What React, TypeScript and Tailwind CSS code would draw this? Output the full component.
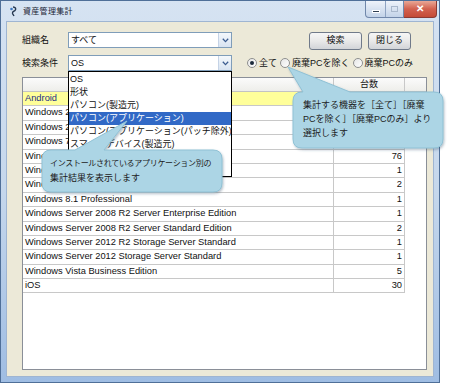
const rows: [string, number][] = [
  ['Android', 12],
  ['Windows 2000 Professional', 3],
  ['Windows 2003 Server Standard Edition', 1],
  ['Windows 7 Enterprise', 8],
  ['Windows 7 Professional', 76],
  ['Windows 7 Ultimate', 1],
  ['Windows 8 Pro', 2],
  ['Windows 8.1 Professional', 1],
  ['Windows Server 2008 R2 Server Enterprise Edition', 1],
  ['Windows Server 2008 R2 Server Standard Edition', 2],
  ['Windows Server 2012 R2 Storage Server Standard', 1],
  ['Windows Server 2012 Storage Server Standard', 1],
  ['Windows Vista Business Edition', 5],
  ['iOS', 30],
];

const options = [
  'OS',
  '形状',
  'パソコン(製造元)',
  'パソコン(アプリケーション)',
  'パソコン(アプリケーション(パッチ除外))',
  'スマートデバイス(製造元)',
  'スマートデバイス(アプリケーション)',
  '形状(製造元)',
];

function Combo({ value }: { value: string }) {
  return (
    <div className="flex h-[16px] w-[164px] border border-[#7f9db9] bg-white">
      <span className="flex-1 pl-[2px] text-[9px] leading-[14px]">{value}</span>
      <span className="flex w-[13px] items-center justify-center border-l border-[#c5d3e6] bg-gradient-to-b from-[#f4f8fc] to-[#d8e3f1]">
        <svg width="7" height="5" viewBox="0 0 7 5">
          <path d="M0.8 0.8 L3.5 3.6 L6.2 0.8" fill="none" stroke="#3a5b8f" strokeWidth="1.3" />
        </svg>
      </span>
    </div>
  );
}

function Button({ label, width }: { label: string; width: string }) {
  return (
    <div
      className={`flex h-[18px] ${width} items-center justify-center rounded-[3px] border border-[#707a8a] bg-gradient-to-b from-[#f6f6f6] via-[#e9e9e9] to-[#d2d4d8] text-[9px]`}
    >
      {label}
    </div>
  );
}

function Radio({ label, checked = false }: { label: string; checked?: boolean }) {
  return (
    <div className="flex items-center gap-[2px]">
      <span className="flex h-[10px] w-[10px] items-center justify-center rounded-full border border-[#8e8f8f] bg-gradient-to-br from-[#e6e6e6] to-white">
        {checked && <span className="h-[4px] w-[4px] rounded-full bg-[#1c2a3c]" />}
      </span>
      <span className="text-[9px] leading-[12px]">{label}</span>
    </div>
  );
}

export default function App() {
  return (
    <div className="relative h-[385px] w-[450px] overflow-hidden bg-white font-['Liberation_Sans','Noto_Sans_CJK_JP',sans-serif] text-[#111]">
      <div className="flex h-[383px] w-[440px] flex-col border border-[#4f6f98] bg-gradient-to-b from-[#d6e3f2] via-[#c5d7ec] to-[#9fbde3]">
        {/* title bar */}
        <div className="flex h-[20px] shrink-0">
          <div className="flex items-center gap-[5px] pl-[8px] pt-[1px]">
            <svg width="9" height="11" viewBox="0 0 9 11">
              <path d="M4 1 C6.5 1 7.5 3 6 4.5 C5 5.5 3 5.5 3.5 7.5 L5 10" fill="none" stroke="#24364f" strokeWidth="1.4" />
              <circle cx="2.5" cy="3" r="1.3" fill="#3d78c0" />
            </svg>
            <span className="text-[8px] tracking-[0.3px] text-[#1b2636]">資産管理集計</span>
          </div>
          <div className="ml-auto mr-[2px] flex h-[17px]">
            <div className="flex w-[39px] overflow-hidden rounded-bl-[4px] border border-t-0 border-[#7087aa] bg-gradient-to-b from-[#eef3fa] to-[#c3d3e8]">
              <div className="flex w-[19px] items-end justify-center pb-[4px]">
                <span className="h-[3px] w-[8px] border border-white bg-[#2f3e52]" />
              </div>
              <div className="flex flex-1 items-center justify-center border-l border-[#8ea3c2]">
                <span className="h-[6px] w-[7px] border border-[#a9b8cc] bg-transparent" />
              </div>
            </div>
            <div className="flex w-[33px] items-center justify-center rounded-br-[4px] border border-l-0 border-t-0 border-[#8a3a33] bg-gradient-to-b from-[#e8a796] via-[#d2614f] to-[#c44a36] text-[10px] font-bold leading-none text-white">
              ✕
            </div>
          </div>
        </div>

        {/* client area */}
        <div className="relative mx-[5px] mb-[5px] flex flex-1 flex-col border border-[#9fb5d2] bg-[#ece9d8] pb-[6px] pl-[15px] pr-[6px] pt-[10px]">
          <div className="flex h-[18px] items-start">
            <span className="w-[46px] text-[9px] leading-[16px]">組織名</span>
            <Combo value="すべて" />
            <div className="ml-[77px] flex gap-[6px]">
              <Button label="検索" width="w-[53px]" />
              <Button label="閉じる" width="w-[43px]" />
            </div>
          </div>
          <div className="mt-[5px] flex h-[16px] items-center">
            <span className="w-[46px] text-[9px] leading-[16px]">検索条件</span>
            <Combo value="OS" />
            <div className="ml-[15px] flex items-center gap-[3px]">
              <Radio label="全て" checked />
              <Radio label="廃棄PCを除く" />
              <Radio label="廃棄PCのみ" />
            </div>
          </div>

          {/* grid */}
          <div className="mt-[6px] flex flex-1 flex-col border border-[#8a8f98] bg-white">
            <div className="grid h-[14px] grid-cols-[311px_71px_1fr] border-b border-[#c3c3c3] bg-gradient-to-b from-[#fbfbfb] to-[#eeeeea] text-[9px] leading-[13px]">
              <span className="border-r border-[#c8c8c8]" />
              <span className="border-r border-[#c8c8c8] text-center">台数</span>
              <span />
            </div>
            {rows.map(([name, count], i) => (
              <div key={name} className="grid h-[14.4px] grid-cols-[311px_71px] text-[9.3px] leading-[13px]">
                <span
                  className={`overflow-hidden whitespace-nowrap border-b border-r border-[#c8c8c8] pl-[2px] ${
                    i === 0 ? 'bg-[#ffff9a] text-[#1d2f86]' : ''
                  }`}
                >
                  {name}
                </span>
                <span className="border-b border-r border-[#c8c8c8] pr-[2px] text-right">{count}</span>
              </div>
            ))}
          </div>

          {/* open dropdown list */}
          <div className="absolute left-[61px] top-[49px] h-[106px] w-[164px] overflow-hidden border border-black bg-white pt-[1px]">
            {options.map((o, i) => (
              <div
                key={o}
                className={`h-[13px] whitespace-nowrap pl-[1px] text-[9px] leading-[13px] ${
                  i === 3 ? 'bg-[#3169c6] text-white' : ''
                }`}
              >
                {o}
              </div>
            ))}
          </div>
        </div>
      </div>

      {/* callouts */}
      <svg className="pointer-events-none absolute left-0 top-0" width="450" height="385">
        <defs>
          <filter id="sh" x="-10%" y="-10%" width="120%" height="130%">
            <feDropShadow dx="1" dy="1.5" stdDeviation="1.2" floodColor="#30506a" floodOpacity="0.35" />
          </filter>
        </defs>
        <path
          d="M51 150 L75 150 L127 121 L104 150 L213 150 Q222 150 222 159 L222 183 Q222 192 213 192 L51 192 Q42 192 42 183 L42 159 Q42 150 51 150 Z"
          fill="#acd5e5"
          stroke="#8fc1d5"
          filter="url(#sh)"
        />
        <path
          d="M302 92 L303 92 L288 67 L350 92 L434 92 Q443 92 443 101 L443 139 Q443 148 434 148 L302 148 Q293 148 293 139 L293 101 Q293 92 302 92 Z"
          fill="#acd5e5"
          stroke="#8fc1d5"
          filter="url(#sh)"
        />
      </svg>
      <div className="absolute left-[50px] top-[156px] text-[9px] leading-[15px] text-[#1c1c1c]">
        <div className="text-[8px] tracking-[-0.3px]">インストールされているアプリケーション別の</div>
        <div>集計結果を表示します</div>
      </div>
      <div className="absolute left-[303px] top-[98px] text-[9px] leading-[14px] text-[#1c1c1c]">
        <div>集計する機器を［全て］［廃棄</div>
        <div>PCを除く］［廃棄PCのみ］より</div>
        <div>選択します</div>
      </div>
    </div>
  );
}
